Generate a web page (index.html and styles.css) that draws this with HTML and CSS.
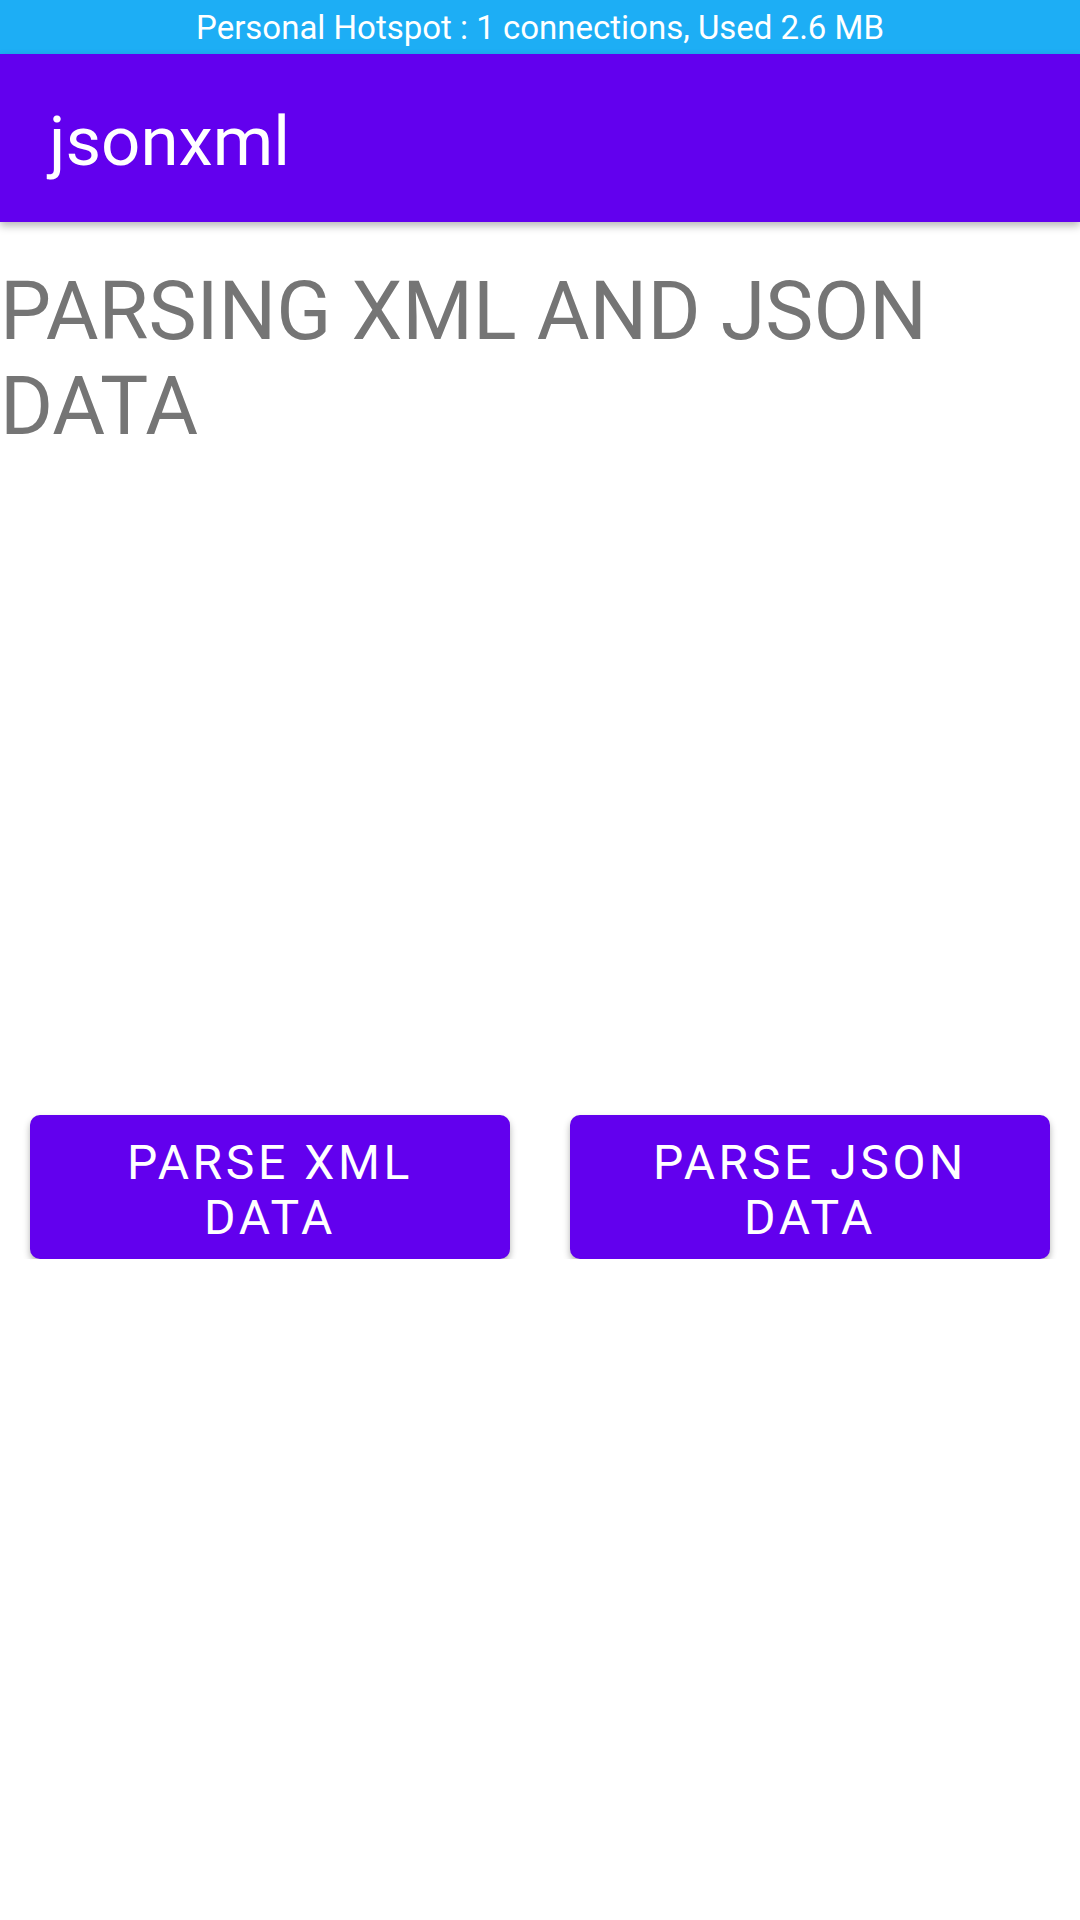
FILE: index.html
```html
<!DOCTYPE html>
<html>
<head>
<meta charset="utf-8">
<link rel="stylesheet" href="styles.css">
</head>
<body>
<div class="status">Personal Hotspot : 1 connections, Used 2.6 MB</div>
<header class="appbar"><span class="apptitle">jsonxml</span></header>
<main class="content">
  <h1 class="heading">PARSING XML AND JSON DATA</h1>
  <div class="buttons">
    <button class="btn">PARSE XML<br>DATA</button>
    <button class="btn">PARSE JSON<br>DATA</button>
  </div>
</main>
</body>
</html>
```
FILE: styles.css
```css
html, body {
  margin: 0;
  padding: 0;
  background: #ffffff;
  font-family: Roboto, "Noto Sans", sans-serif;
}
.status {
  height: 54px;
  box-sizing: border-box;
  padding-top: 2px;
  background: #1daef5;
  color: #ffffff;
  font-size: 33px;
  line-height: 52px;
  text-align: center;
}
.appbar {
  height: 168px;
  background: #6200ee;
  display: flex;
  align-items: center;
  padding-left: 49px;
  box-shadow: 0 4px 8px rgba(0, 0, 0, 0.28);
  position: relative;
  z-index: 1;
}
.apptitle {
  color: #ffffff;
  font-size: 69px;
  line-height: 80px;
  padding-top: 7px;
}
.content {
  display: flex;
  flex-direction: column;
}
.heading {
  margin: 42px 0 0 0;
  font-weight: 400;
  font-size: 81px;
  line-height: 95px;
  color: #757575;
  padding-right: 60px;
}
.buttons {
  display: flex;
  gap: 60px;
  padding: 0 30px;
  margin-top: 661px;
}
.btn {
  flex: 1;
  height: 144px;
  box-sizing: border-box;
  border: none;
  border-radius: 10px;
  background: #6200ee;
  color: #ffffff;
  font-family: Roboto, "Noto Sans", sans-serif;
  font-size: 48px;
  line-height: 55px;
  letter-spacing: 0.075em;
  padding: 5px 0 0 0;
  box-shadow: 0 4px 7px rgba(0, 0, 0, 0.3);
}
```
